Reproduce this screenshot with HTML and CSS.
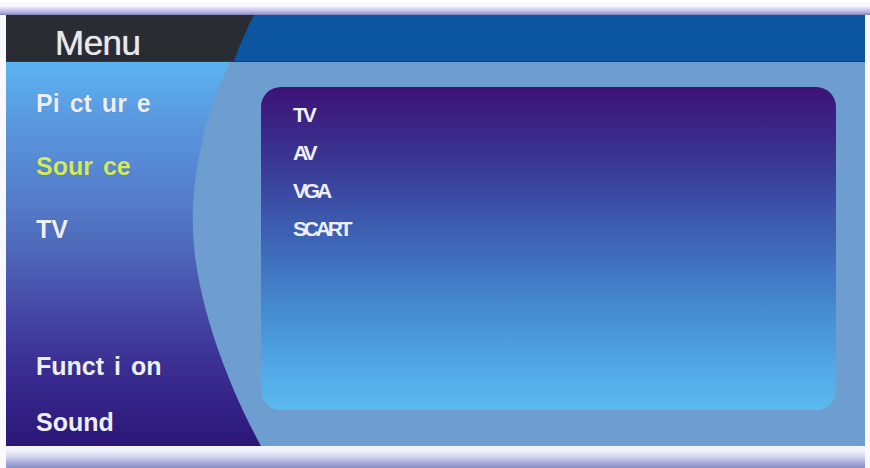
FILE: index.html
```html
<!DOCTYPE html>
<html lang="en">
<head>
<meta charset="utf-8">
<title>Menu</title>
<link rel="stylesheet" href="styles.css">
</head>
<body>
<div class="screen">
  <div class="top-strip"></div>
  <div class="frame">
    <header class="header">
      <div class="title">Menu</div>
    </header>
    <main class="main">
      <nav class="panel">
        <div class="group">
          <div class="item"><span class="sp">Pi</span><span class="sp">ct</span><span class="sp">ur</span>e</div>
          <div class="item item-active"><span class="sp">Sour</span>ce</div>
          <div class="item">TV</div>
        </div>
        <div class="group group-bottom">
          <div class="item"><span class="sp">Funct</span><span class="sp">i</span>on</div>
          <div class="item">Sound</div>
        </div>
      </nav>
      <section class="content">
        <div class="box">
          <div class="opt">TV</div>
          <div class="opt">AV</div>
          <div class="opt">VGA</div>
          <div class="opt">SCART</div>
        </div>
      </section>
    </main>
    <div class="bottom-strip"></div>
  </div>
</div>
</body>
</html>
```

FILE: styles.css
```css
* { box-sizing: border-box; }

html, body {
  margin: 0;
  padding: 0;
  background: #ffffff;
}

body {
  font-family: "Liberation Sans", Arial, sans-serif;
}

.screen {
  width: 870px;
  height: 468px;
  overflow: hidden;
  background: #f8f8fd;
}

.top-strip {
  height: 15px;
  background: linear-gradient(#ffffff 0%, #f6f6fc 40%, #c8c8ea 68%, #a4a4d8 88%, #7a80b8 100%);
}

.frame {
  width: 859px;
  margin-left: 6px;
}

.header {
  height: 47px;
  display: flex;
  background: #0b55a1;
  border-bottom: 1px solid #153e70;
}

.title {
  width: 248px;
  height: 46px;
  padding: 9px 0 0 49px;
  background: #292c33;
  clip-path: polygon(0 0, 248px 0, 242px 12px, 234px 30px, 228px 100%, 0 100%);
  color: #e8e8ea;
  font-size: 35px;
  line-height: 38px;
  letter-spacing: -0.5px;
  text-shadow: 0 0 1px #e8e8ea, 0 1px 1px rgba(0, 0, 0, 0.5);
}

.main {
  height: 384px;
  display: flex;
  background: #6e9ecf;
}

.panel {
  width: 255px;
  flex-shrink: 0;
  display: flex;
  flex-direction: column;
  justify-content: space-between;
  padding: 26px 0 9px 30px;
  background: linear-gradient(#5cb4f2 0%, #5a9ae0 14%, #5684d0 30%, #4f6abb 48%, #4649a8 64%, #3a2d92 80%, #2c1678 100%);
  clip-path: path("M0 0 H224 C197 55 185 120 187 168 C189 230 215 310 255 384 H0 Z");
}

.group {
  display: flex;
  flex-direction: column;
  gap: 33px;
}

.group-bottom {
  gap: 26px;
}

.item {
  font-size: 25px;
  font-weight: bold;
  line-height: 30px;
  color: #eceff9;
  white-space: nowrap;
  text-shadow: 0 0 1px rgba(40, 40, 90, 0.4);
}

.item-active {
  color: #d2ea5c;
}

.sp {
  margin-right: 10px;
}

.content {
  flex: 1;
  padding: 25px 29px 36px 0;
}

.box {
  height: 100%;
  border-radius: 20px;
  background: linear-gradient(#3c1276 0%, #3a3592 22%, #3c5bae 42%, #4486cc 66%, #4fa4e2 84%, #5bbaf0 100%);
  padding: 16px 0 0 32px;
  display: flex;
  flex-direction: column;
  gap: 14px;
}

.opt {
  font-size: 21px;
  font-weight: bold;
  line-height: 24px;
  letter-spacing: -3.2px;
  color: #eef0fa;
}

.bottom-strip {
  height: 22px;
  background: linear-gradient(#f4f4fe 0%, #f0f0fb 22%, #d2d4ee 50%, #a4a8d8 78%, #8a90c4 100%);
}
```
